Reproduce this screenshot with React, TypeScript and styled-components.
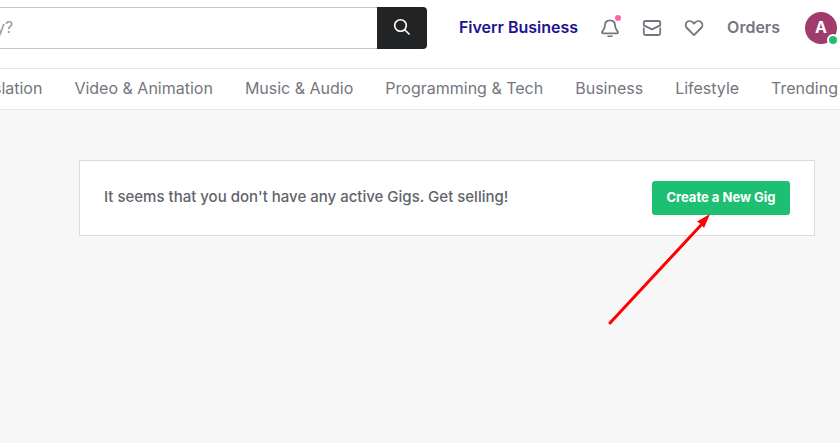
import React from 'react';
import styled, { createGlobalStyle } from 'styled-components';

const GlobalStyle = createGlobalStyle`
  *, *::before, *::after { box-sizing: border-box; }
  body {
    margin: 0;
    background: #f7f7f7;
    color: #62646a;
    font-family: Inter, "Liberation Sans", Arial, sans-serif;
    font-size: 16px;
    line-height: 24px;
  }
`;

const Page = styled.div`
  min-height: 100vh;
  overflow: hidden;
`;

const Header = styled.header`
  display: flex;
  align-items: center;
  padding: 7px 3px 19px 0;
  background: #fff;
`;

const SearchForm = styled.form`
  display: flex;
  flex: 1;
  min-width: 0;
  height: 42px;
`;

const SearchInput = styled.input`
  flex: 1;
  min-width: 0;
  padding: 0 0 2px;
  border: solid #c5c6c9;
  border-width: 1px 0;
  border-radius: 0;
  outline: none;
  font: inherit;
  text-indent: -4px;
  color: #62646a;
  &::placeholder {
    color: #95979d;
    opacity: 1;
  }
`;

const SearchButton = styled.button`
  display: flex;
  align-items: center;
  justify-content: center;
  width: 50px;
  padding: 0 0 2px;
  border: 0;
  border-radius: 0 4px 4px 0;
  background: #222325;
  color: #fff;
`;

const Actions = styled.nav`
  display: flex;
  align-items: center;
  padding-left: 32px;
`;

const HeaderLink = styled.a<{ $color: string }>`
  padding-bottom: 2px;
  color: ${({ $color }) => $color};
  font-weight: 600;
  text-decoration: none;
  white-space: nowrap;
`;

const IconGroup = styled.div`
  display: flex;
  gap: 20px;
  padding: 0 22px 0 21px;
`;

const IconButton = styled.button`
  position: relative;
  display: flex;
  padding: 0;
  border: 0;
  background: none;
  color: #74767e;
`;

const UnreadDot = styled.span`
  position: absolute;
  top: -2px;
  right: 0;
  width: 6px;
  height: 6px;
  border-radius: 50%;
  background: #ff62ad;
`;

const Avatar = styled.button`
  position: relative;
  width: 32px;
  height: 32px;
  margin-left: 25px;
  padding: 0 0 2px;
  border: 0;
  border-radius: 50%;
  background: #a03c6c;
  color: #fff;
  font: inherit;
  font-weight: 700;
`;

const OnlineDot = styled.span`
  position: absolute;
  right: -2px;
  bottom: -2px;
  width: 12px;
  height: 12px;
  border: 2px solid #fff;
  border-radius: 50%;
  background: #1dbf73;
`;

const Categories = styled.nav`
  display: flex;
  justify-content: flex-end;
  gap: 32px;
  padding: 7px 2px 9px;
  border: solid #e4e5e7;
  border-width: 1px 0;
  background: #fff;
`;

const CategoryLink = styled.a`
  color: #74767e;
  text-decoration: none;
  white-space: nowrap;
`;

const Main = styled.main`
  padding: 50px 25px 50px 79px;
`;

const EmptyGigs = styled.section`
  display: flex;
  align-items: center;
  justify-content: space-between;
  padding: 20px 24px;
  border: 1px solid #dadbdd;
  background: #fff;
`;

const Message = styled.p`
  margin: 0;
  padding-bottom: 2px;
  font-size: 15px;
  font-weight: 500;
`;

const CreateButton = styled.button`
  position: relative;
  min-width: 138px;
  height: 34px;
  padding: 0 12px 2px;
  border: 0;
  border-radius: 3px;
  background: #1dbf73;
  color: #fff;
  font: inherit;
  font-size: 13px;
  font-weight: 700;
  white-space: nowrap;
`;

const Pointer = styled.svg`
  position: absolute;
  top: 33px;
  right: 79px;
  width: 104px;
  height: 112px;
  pointer-events: none;
`;

const categories = [
  'slation',
  'Video & Animation',
  'Music & Audio',
  'Programming & Tech',
  'Business',
  'Lifestyle',
  'Trending',
];

const SearchIcon = () => (
  <svg width="18" height="18" viewBox="0 0 18 18" fill="none" stroke="currentColor" strokeWidth="1.6">
    <circle cx="7.5" cy="7.5" r="5.8" />
    <path d="M11.7 11.7 16.5 16.5" />
  </svg>
);

const BellIcon = () => (
  <svg width="22" height="22" viewBox="0 0 22 22" fill="none" stroke="currentColor" strokeWidth="1.8" strokeLinecap="round" strokeLinejoin="round">
    <path d="M11 3.4C7.5 3.4 5.9 5.7 5.9 8.8 5.9 12.6 3 14 3 15.5 3 16.1 3.4 16.4 4 16.4H18C18.6 16.4 19 16.1 19 15.5 19 14 16.1 12.6 16.1 8.8 16.1 5.7 14.5 3.4 11 3.4Z" />
    <path d="M9 19.3H13" strokeWidth="1.6" />
  </svg>
);

const MailIcon = () => (
  <svg width="22" height="22" viewBox="0 0 22 22" fill="none" stroke="currentColor" strokeWidth="1.8" strokeLinejoin="round">
    <path d="M2.8 8.4V5.6Q2.8 4 4.4 4H17.6Q19.2 4 19.2 5.6V8.4L11 12.4Z" />
    <path d="M2.8 10.6V16.5Q2.8 18 4.3 18H17.7Q19.2 18 19.2 16.5V10.6" />
  </svg>
);

const HeartIcon = () => (
  <svg width="22" height="22" viewBox="0 0 22 22" fill="none" stroke="currentColor" strokeWidth="1.8" strokeLinejoin="round">
    <path d="M11 18.2 3.9 11C2.2 9.3 2.2 6.7 3.8 5.1 5.5 3.6 8.1 3.7 9.7 5.3L11 6.6 12.3 5.3C13.9 3.7 16.5 3.6 18.2 5.1 19.8 6.7 19.8 9.3 18.1 11Z" />
  </svg>
);

export default function App() {
  return (
    <Page>
      <GlobalStyle />
      <Header>
        <SearchForm role="search" onSubmit={(event) => event.preventDefault()}>
          <SearchInput type="text" aria-label="Search services" placeholder="y?" />
          <SearchButton type="submit" aria-label="Search">
            <SearchIcon />
          </SearchButton>
        </SearchForm>
        <Actions aria-label="Account">
          <HeaderLink href="#business" $color="#1b1390">Fiverr Business</HeaderLink>
          <IconGroup>
            <IconButton type="button" aria-label="Notifications">
              <BellIcon />
              <UnreadDot />
            </IconButton>
            <IconButton type="button" aria-label="Messages">
              <MailIcon />
            </IconButton>
            <IconButton type="button" aria-label="Saved">
              <HeartIcon />
            </IconButton>
          </IconGroup>
          <HeaderLink href="#orders" $color="#74767e">Orders</HeaderLink>
          <Avatar type="button">
            A
            <OnlineDot />
          </Avatar>
        </Actions>
      </Header>
      <Categories aria-label="Categories">
        {categories.map((name) => (
          <CategoryLink key={name} href="#categories">{name}</CategoryLink>
        ))}
      </Categories>
      <Main>
        <EmptyGigs>
          <Message>It seems that you don't have any active Gigs. Get selling!</Message>
          <CreateButton type="button">
            Create a New Gig
            <Pointer viewBox="0 0 104 112" aria-hidden="true">
              <path d="M3 109 95 10" fill="none" stroke="#fe0000" strokeWidth="3" strokeLinecap="round" />
              <path d="M103 0 90 7.5 93 9.5 94.5 11 97 14Z" fill="#fe0000" />
            </Pointer>
          </CreateButton>
        </EmptyGigs>
      </Main>
    </Page>
  );
}
